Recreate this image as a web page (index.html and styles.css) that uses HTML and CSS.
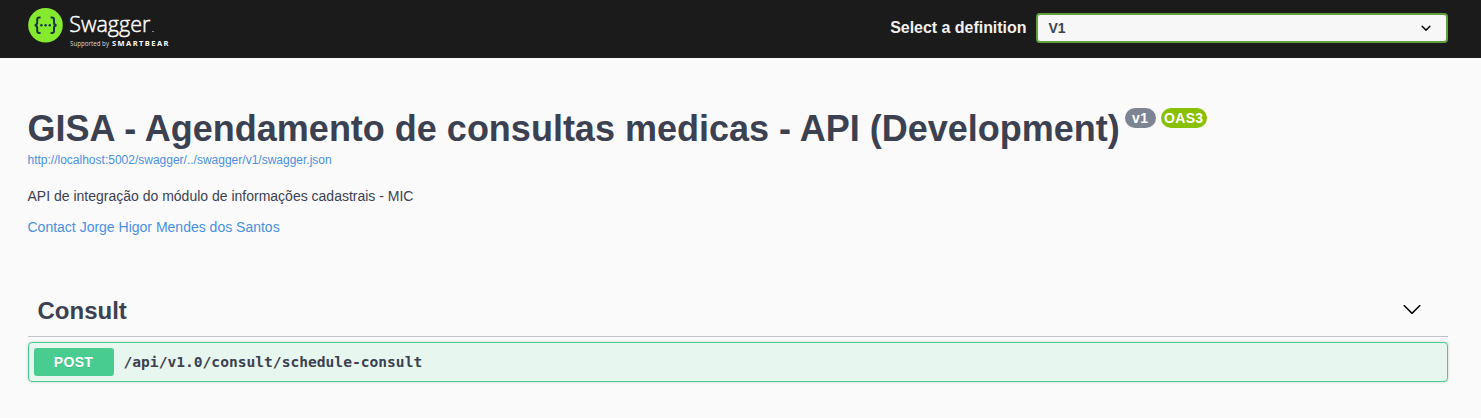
FILE: index.html
```html
<!DOCTYPE html>
<html lang="en">
<head>
<meta charset="utf-8">
<title>Swagger UI</title>
<link rel="stylesheet" href="styles.css">
</head>
<body>
<header class="topbar">
  <div class="wrapper topbar-row">
    <svg class="logo" width="150" height="50" viewBox="0 0 150 50" role="img" aria-label="Swagger">
      <circle cx="17.500" cy="25.200" r="17.300" fill="#85ea2d"/>
      <g fill="none" stroke="#173647" stroke-width="2">
        <path d="M12.600 17.400h-1.400q-2 0-2 2v3.200q0 2.600-2.600 2.600q2.600 0 2.600 2.600v3.200q0 2 2 2h1.400"/>
        <path d="M22.600 17.400h1.400q2 0 2 2v3.200q0 2.600 2.600 2.600q-2.600 0-2.600 2.600v3.200q0 2-2 2h-1.400"/>
      </g>
      <g fill="#173647"><circle cx="13.400" cy="25.200" r="1.200"/><circle cx="17.600" cy="25.200" r="1.200"/><circle cx="21.800" cy="25.200" r="1.200"/></g>
      <text class="logo-name" x="41.300" y="32.300" textLength="81" lengthAdjust="spacingAndGlyphs">Swagger</text>
      <rect x="124" y="31" width="2" height="1" fill="#888"/>
      <text class="logo-by" x="42" y="46" textLength="39" lengthAdjust="spacingAndGlyphs">Supported by</text>
      <text class="logo-brand" x="84" y="46" textLength="56.500" lengthAdjust="spacing">SMARTBEAR</text>
    </svg>
    <label class="definition">
      <span class="definition-label">Select a definition</span>
      <span class="select">V1
        <svg width="20" height="20" viewBox="0 0 20 20"><path d="M13.418 7.859a.695.695 0 0 1 .978 0 .68.680 0 0 1 0 .969l-3.908 3.830a.697.697 0 0 1-.979 0l-3.908-3.830a.680.680 0 0 1 0-.969.695.695 0 0 1 .978 0L10 11z"/></svg>
      </span>
    </label>
  </div>
</header>
<main class="wrapper">
  <section class="info">
    <h1 class="title">GISA - Agendamento de consultas medicas - API (Development)<span class="badges"><span class="badge">v1</span><span class="badge badge-oas">OAS3</span></span></h1>
    <a class="spec-link">http://localhost:5002/swagger/../swagger/v1/swagger.json</a>
    <p class="description">API de integração do módulo de informações cadastrais - MIC</p>
    <a class="contact">Contact Jorge Higor Mendes dos Santos</a>
  </section>
  <section>
    <h2 class="tag">Consult
      <svg width="20" height="20" viewBox="0 0 20 20"><path d="M17.418 6.109c.272-.268.709-.268.979 0s.271.701 0 .969l-7.908 7.830c-.270.268-.707.268-.979 0l-7.908-7.830c-.270-.268-.270-.701 0-.969s.709-.268.979 0L10 13.250z"/></svg>
    </h2>
    <div class="operation">
      <span class="method">POST</span>
      <span class="path">/api/v1.0/consult/schedule-consult</span>
    </div>
  </section>
</main>
</body>
</html>
```
FILE: styles.css
```css
* { box-sizing: border-box; }
body {
  margin: 0;
  min-height: 418px;
  background: #fafafa;
  color: #3b4151;
  font-family: "Liberation Sans", Arial, sans-serif;
}
.wrapper { width: 1420px; margin-left: 27.5px; }
.topbar { height: 58px; background: #1b1b1b; }
.topbar-row { display: flex; justify-content: space-between; }
.logo { display: block; }
.logo-name { font: 300 22px "Open Sans", sans-serif; fill: #fff; stroke: #fff; stroke-width: .45px; }
.logo-by { font: 6.5px "Open Sans", sans-serif; fill: #ddd; }
.logo-brand { font: 700 7.5px "Open Sans", sans-serif; fill: #fff; }
.definition {
  display: flex;
  align-items: center;
  gap: 9px;
  height: 30px;
  margin-top: 13px;
  color: #f0f0f0;
  font-size: 16px;
  font-weight: 700;
}
.definition-label { letter-spacing: -.03px; }
.select {
  display: flex;
  align-items: center;
  justify-content: space-between;
  width: 412px;
  height: 30px;
  padding: 0 10px 0 11px;
  border: 2px solid #62a03f;
  border-radius: 4px;
  background: #f7f7f7;
  color: #3b4151;
  font-size: 14px;
}
.select svg { fill: #000; }
.info { padding-top: 50px; }
.title {
  display: flex;
  align-items: flex-start;
  margin: 0;
  font-size: 36px;
  line-height: 42px;
  white-space: nowrap;
}
.badges { display: flex; gap: 5px; margin-left: 5px; }
.badge {
  width: 31px;
  height: 20px;
  border-radius: 10px;
  background: #7d8492;
  color: #fff;
  font-size: 14px;
  letter-spacing: .3px;
  line-height: 20px;
  text-align: center;
}
.badge-oas { width: 46px; background: #89bf04; }
.spec-link { display: block; color: #4990e2; font-size: 12px; line-height: 14px; margin-top: 3px; }
.description { margin: 21px 0 0; font-size: 14px; line-height: 16px; }
.contact { display: block; margin-top: 15px; color: #4990e2; font-size: 14px; line-height: 16px; }
.tag {
  display: flex;
  align-items: center;
  justify-content: space-between;
  height: 52px;
  margin: 50px 0 5px;
  padding: 0 26px 0 10px;
  border-bottom: 1px solid rgba(59, 65, 81, .3);
  font-size: 24px;
}
.tag svg { margin-bottom: 3px; fill: #000; }
.operation {
  display: flex;
  align-items: center;
  height: 40px;
  padding: 5px;
  border: 1px solid #49cc90;
  border-radius: 4px;
  background: #e8f6f0;
  box-shadow: 0 0 3px rgba(0, 0, 0, .19);
}
.method {
  width: 80px;
  height: 28px;
  border-radius: 3px;
  background: #49cc90;
  color: #fff;
  font-size: 14px;
  font-weight: 700;
  letter-spacing: .3px;
  line-height: 28px;
  text-align: center;
  text-shadow: 0 1px 0 rgba(0, 0, 0, .1);
}
.path { padding: 0 0 1px 10px; font: 700 14.6px "DejaVu Sans Mono", monospace; }
```
